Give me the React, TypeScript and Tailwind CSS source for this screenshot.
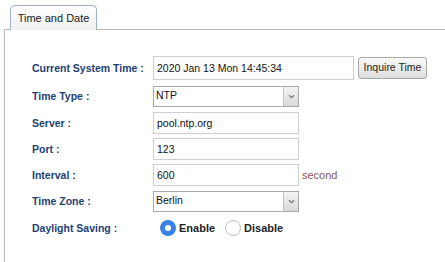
import React from "react";

const labelCls =
  "w-[121px] shrink-0 text-[10.5px] font-bold text-[#1d3f72] leading-none";
const inputCls =
  "h-[22px] w-[146px] border border-[#cfcfcf] bg-white px-[3px] text-[10.5px] text-[#111] outline-none";

function Select({ value }: { value: string }) {
  return (
    <div className="flex h-[21px] w-[146px] border border-[#a9a9a9] bg-white">
      <div className="flex flex-1 items-center px-[2px] text-[10.5px] text-[#111]">
        {value}
      </div>
      <div className="flex w-[15px] items-center justify-center border-l border-[#c4c4c4] bg-gradient-to-b from-[#f4f4f4] to-[#d9d9d9]">
        <svg width="7" height="5" viewBox="0 0 7 5">
          <path d="M1 1.2 L3.5 3.6 L6 1.2" fill="none" stroke="#777" strokeWidth="1.3" />
        </svg>
      </div>
    </div>
  );
}

function Row({
  label,
  h,
  children,
}: {
  label: string;
  h: string;
  children: React.ReactNode;
}) {
  return (
    <div className={`flex items-center ${h}`}>
      <div className={labelCls}>{label}</div>
      <div className="flex items-center">{children}</div>
    </div>
  );
}

export default function App() {
  return (
    <div className="h-[262px] w-[445px] overflow-hidden bg-white font-['Liberation_Sans',Arial,sans-serif]">
      <div className="pl-[4px] pt-[5px]">
        <div className="flex pl-[6px]">
          <div className="relative -mb-px flex h-[25px] w-[87px] items-center justify-center rounded-t-[5px] border border-b-0 border-[#9fb1c8] bg-gradient-to-b from-white to-[#f1f1f1] text-[11px] text-[#222]">
            Time and Date
          </div>
        </div>
        <div className="h-[240px] border-l border-t border-[#b9b9b9] pl-[27px] pt-[24px]">
          <Row label="Current System Time :" h="h-[28px]">
            <input
              readOnly
              value="2020 Jan 13 Mon 14:45:34"
              className="h-[24px] w-[201px] border border-[#cfcfcf] bg-white px-[3px] text-[10.5px] text-[#111] outline-none"
            />
            <button className="ml-[4px] h-[22px] w-[69px] rounded-[3px] border border-[#a8a8a8] bg-gradient-to-b from-[#fafafa] to-[#dedede] text-[10.5px] text-[#222]">
              Inquire Time
            </button>
          </Row>
          <Row label="Time Type :" h="h-[28px]">
            <Select value="NTP" />
          </Row>
          <Row label="Server :" h="h-[26px]">
            <input readOnly value="pool.ntp.org" className={inputCls} />
          </Row>
          <Row label="Port :" h="h-[26px]">
            <input readOnly value="123" className={inputCls} />
          </Row>
          <Row label="Interval :" h="h-[26px]">
            <input readOnly value="600" className={inputCls} />
            <span className="ml-[3px] text-[11px] text-[#7d5c5c]">second</span>
          </Row>
          <Row label="Time Zone :" h="h-[26px]">
            <Select value="Berlin" />
          </Row>
          <Row label="Daylight Saving :" h="h-[28px]">
            <div className="ml-[7px] flex items-center">
              <span className="flex h-[16px] w-[16px] items-center justify-center rounded-full bg-[#3b82e8]">
                <span className="h-[6px] w-[6px] rounded-full bg-white" />
              </span>
              <span className="ml-[3px] text-[11px] font-bold text-[#222]">Enable</span>
              <span className="ml-[10px] h-[16px] w-[16px] rounded-full border border-[#c2bdb7] bg-white" />
              <span className="ml-[3px] text-[11px] font-bold text-[#222]">Disable</span>
            </div>
          </Row>
        </div>
      </div>
    </div>
  );
}
